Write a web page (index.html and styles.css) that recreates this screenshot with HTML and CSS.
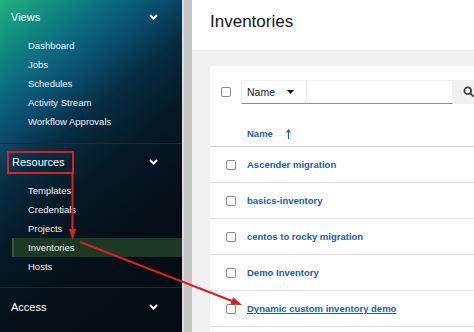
FILE: index.html
```html
<!DOCTYPE html>
<html lang="en">
<head>
    <meta charset="UTF-8">
    <meta name="viewport" content="width=device-width, initial-scale=1.0">
    <title>Inventories</title>
    <link rel="stylesheet" href="styles.css">
</head>
<body>

<div class="page">
    <nav class="sidebar">
        <section class="nav-group views">
            <div class="nav-head">
                <span>Views</span>
                <svg class="chevron" width="9" height="6" viewBox="0 0 9 6"><path d="M1 1 L4.5 4.5 L8 1" /></svg>
            </div>
            <ul class="nav-list">
                <li>Dashboard</li>
                <li>Jobs</li>
                <li>Schedules</li>
                <li>Activity Stream</li>
                <li>Workflow Approvals</li>
            </ul>
        </section>
        <section class="nav-group resources">
            <div class="nav-head">
                <span>Resources</span>
                <svg class="chevron" width="9" height="6" viewBox="0 0 9 6"><path d="M1 1 L4.5 4.5 L8 1" /></svg>
            </div>
            <ul class="nav-list">
                <li>Templates</li>
                <li>Credentials</li>
                <li>Projects</li>
                <li class="active">Inventories</li>
                <li>Hosts</li>
            </ul>
        </section>
        <section class="nav-group access">
            <div class="nav-head">
                <span>Access</span>
                <svg class="chevron" width="9" height="6" viewBox="0 0 9 6"><path d="M1 1 L4.5 4.5 L8 1" /></svg>
            </div>
        </section>
    </nav>

    <div class="scroll-strip"></div>

    <main class="main">
        <header class="page-head">
            <h1>Inventories</h1>
        </header>
        <div class="page-body">
            <div class="card">
                <div class="toolbar">
                    <span class="check"></span>
                    <div class="select">
                        <span>Name</span>
                        <svg class="caret" width="7" height="4" viewBox="0 0 7 4"><path d="M0 0 H7 L3.5 4 Z" /></svg>
                    </div>
                    <div class="search-input"></div>
                    <div class="search-btn">
                        <svg width="12" height="12" viewBox="0 0 12 12"><circle cx="4.8" cy="4.8" r="3.4" /><path d="M7.3 7.3 L10.5 10.5" /></svg>
                    </div>
                </div>
                <div class="table-head">
                    <span>Name</span>
                    <svg class="sort" width="5" height="10" viewBox="0 0 5 10"><path d="M2.5 1 V10" /><path class="head" d="M0 3.5 L2.5 0 L5 3.5 Z" /></svg>
                </div>
                <ul class="rows">
                    <li class="row"><span class="check"></span><a href="#">Ascender migration</a></li>
                    <li class="row"><span class="check"></span><a href="#">basics-inventory</a></li>
                    <li class="row"><span class="check"></span><a href="#">centos to rocky migration</a></li>
                    <li class="row"><span class="check"></span><a href="#">Demo Inventory</a></li>
                    <li class="row"><span class="check"></span><a href="#" class="hover">Dynamic custom inventory demo</a></li>
                </ul>
            </div>
        </div>
    </main>

    <!-- red annotation marks drawn over the screenshot -->
    <svg class="annotations" width="474" height="332" viewBox="0 0 474 332">
        <rect x="8" y="152" width="65" height="21" />
        <path class="line" d="M72.5 173 V230" />
        <path class="head" d="M69 229 L76 229 L72.5 240 Z" />
        <path class="line" d="M80 242 L232 301" />
        <path class="head" d="M233.2 297.3 L230.3 304.7 L242 305 Z" />
    </svg>
</div>

</body>
</html>
```

FILE: styles.css
```css
/* Base */
* {
    box-sizing: border-box;
}
body {
    margin: 0;
    font-family: 'Liberation Sans', Arial, sans-serif;
    background: #f0f0f0;
    overflow: hidden;
}
ul {
    list-style: none;
    margin: 0;
    padding: 0;
}
.page {
    position: relative;
    display: flex;
    width: 474px;
    height: 332px;
    overflow: hidden;
}

/* Sidebar */
.sidebar {
    flex: 0 0 182px;
    color: #fff;
    background: linear-gradient(140deg, #21b07e 0%, #14917f 9%, #0c6c80 19%, #0a4c6c 29%, #072c42 39%, #061a26 52%, #050f17 72%, #040c12 100%);
}
.nav-group {
    border-bottom: 1px solid #1d2a32;
}
.nav-group.views {
    height: 144px;
}
.nav-group.resources {
    height: 144px;
}
.nav-group.access {
    border-bottom: none;
    padding-top: 2px;
}
.nav-head {
    display: flex;
    justify-content: space-between;
    align-items: center;
    height: 34px;
    padding: 0 24px 0 11px;
    font-size: 11px;
}
.resources .nav-head {
    padding-left: 12px;
    padding-top: 1px;
}
.chevron path {
    fill: none;
    stroke: #fff;
    stroke-width: 2;
}
.nav-list {
    padding-top: 2px;
}
.resources .nav-list {
    padding-top: 3px;
}
.nav-list li {
    height: 19px;
    line-height: 19px;
    margin-left: 12px;
    padding-left: 16px;
    font-size: 9.5px;
    color: #eef4f5;
}
.nav-list li.active {
    background: #1c3923;
    border-left: 2px solid #2f5c39;
    padding-left: 14px;
}

.scroll-strip {
    flex: 0 0 10px;
    background: #c5c5c5;
    border-left: 2px solid #dcdcdc;
}

/* Main area */
.main {
    flex: 1;
    display: flex;
    flex-direction: column;
    min-width: 0;
}
.page-head {
    height: 50px;
    padding: 12px 18px 0;
    background: #fff;
}
.page-head h1 {
    margin: 0;
    font-size: 17px;
    line-height: 19px;
    font-weight: 400;
    color: #151515;
}
.page-body {
    flex: 1;
    padding: 16px 0 0 18px;
    background: #f0f0f0;
}
.card {
    height: 100%;
    width: 320px;
    background: #fff;
}

/* Toolbar */
.toolbar {
    display: flex;
    align-items: center;
    padding: 14px 0 0 11px;
}
.check {
    display: inline-block;
    flex: 0 0 10px;
    width: 10px;
    height: 10px;
    border: 1px solid #8a8d90;
    border-radius: 2px;
    background: #fff;
}
.toolbar .check {
    margin-right: 10px;
}
.select {
    display: flex;
    align-items: center;
    width: 66px;
    height: 24px;
    padding-left: 5px;
    font-size: 10.5px;
    color: #151515;
    border: 1px solid #f0f0f0;
    border-bottom-color: #8a8d90;
}
.caret {
    margin-left: 12px;
}
.caret path {
    fill: #151515;
}
.search-input {
    width: 146px;
    height: 24px;
    border: 1px solid #f0f0f0;
    border-left: none;
    border-bottom-color: #8a8d90;
}
.search-btn {
    display: flex;
    align-items: center;
    width: 30px;
    height: 24px;
    padding-left: 10px;
    background: #f0f0f0;
}
.search-btn circle,
.search-btn path {
    fill: none;
    stroke: #3c3f42;
    stroke-width: 1.8;
}

/* Table */
.table-head {
    display: flex;
    align-items: center;
    height: 43px;
    padding: 17px 0 0 37px;
    border-bottom: 1px solid #d2d2d2;
    font-size: 9.5px;
    font-weight: 700;
    color: #1f5fa6;
}
.sort {
    margin-left: 13px;
}
.sort path {
    stroke: #1f5fa6;
    stroke-width: 1.2;
}
.sort .head {
    fill: #1f5fa6;
    stroke: none;
}
.row {
    display: flex;
    align-items: center;
    height: 36px;
    padding-left: 16px;
    border-bottom: 1px solid #e3e3e3;
}
.row .check {
    margin-right: 11px;
}
.row a {
    font-size: 9.5px;
    font-weight: 700;
    color: #1d5ca3;
    text-decoration: none;
}
.row a.hover {
    text-decoration: underline;
}

/* Annotation layer */
.annotations {
    position: absolute;
    top: 0;
    left: 0;
    pointer-events: none;
}
.annotations rect {
    fill: none;
    stroke: #dc1f1f;
    stroke-width: 2;
}
.annotations .line {
    fill: none;
    stroke: #dc1f1f;
    stroke-width: 2;
}
.annotations .head {
    fill: #dc1f1f;
}
```
